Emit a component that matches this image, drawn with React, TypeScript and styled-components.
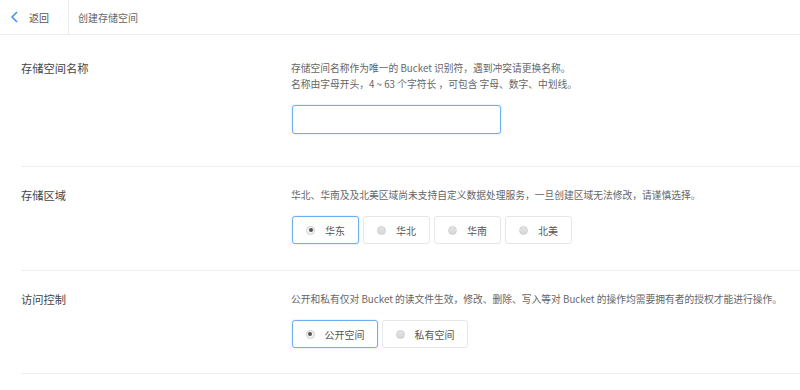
import React, { useState } from "react";
import styled, { createGlobalStyle } from "styled-components";

const GlobalStyle = createGlobalStyle`
    body {
        margin: 0;
        background: #fff;
        font-family: "Noto Sans CJK SC", "Noto Sans", sans-serif;
    }
`;

const Header = styled.div`
    display: flex;
    align-items: center;
    height: 34px;
    border-bottom: 1px solid #ececec;
`;

const BackLink = styled.a`
    display: flex;
    align-items: center;
    gap: 11px;
    width: 69px;
    height: 100%;
    box-sizing: border-box;
    padding-left: 11px;
    border-right: 1px solid #ececec;
    color: #555;
    font-size: 10px;
    cursor: pointer;
`;

const Title = styled.div`
    padding-left: 9px;
    color: #666;
    font-size: 10px;
`;

const Main = styled.div`
    padding: 5px 0 0 21px;
`;

const Section = styled.div<{ $bottom: number }>`
    display: flex;
    padding: 20px 0 ${(p) => p.$bottom}px;
    border-bottom: 1px solid #efefef;
`;

const Label = styled.div`
    width: 270px;
    flex-shrink: 0;
    color: #444;
    font-size: 11.25px;
    line-height: 16px;
`;

const Body = styled.div`
    display: flex;
    flex-direction: column;
    gap: 13px;
`;

const Desc = styled.div`
    color: #666;
    font-size: 9.75px;
    line-height: 16px;
`;

const NameInput = styled.input`
    width: 209px;
    height: 29px;
    margin-left: 1px;
    box-sizing: border-box;
    border: 1px solid #6cb0f2;
    border-radius: 3px;
    box-shadow: 0 0 2px rgba(60, 150, 240, 0.35);
    background: #fff;
    outline: none;
`;

const Options = styled.div`
    display: flex;
    gap: 4px;
    margin-left: 1px;
`;

const Option = styled.button<{ $width: number; $active: boolean }>`
    display: flex;
    align-items: center;
    justify-content: center;
    gap: 10px;
    width: ${(p) => p.$width}px;
    height: 28px;
    padding: 0;
    background: #fff;
    border: 1px solid ${(p) => (p.$active ? "#6cb0f2" : "#e6e6e6")};
    border-radius: 3px;
    box-shadow: ${(p) => (p.$active ? "0 0 2px rgba(60, 150, 240, 0.35)" : "none")};
    color: #555;
    font-family: inherit;
    font-size: 10px;
    cursor: pointer;
`;

const Dot = styled.span<{ $active: boolean }>`
    position: relative;
    width: 9px;
    height: 9px;
    box-sizing: border-box;
    border-radius: 50%;
    border: 1px solid #cfcfcf;
    background: ${(p) => (p.$active ? "#f4f4f4" : "linear-gradient(#e4e4e4, #d6d6d6)")};

    &::after {
        content: "";
        display: ${(p) => (p.$active ? "block" : "none")};
        position: absolute;
        left: 1.5px;
        top: 1.5px;
        width: 4px;
        height: 4px;
        border-radius: 50%;
        background: #555;
    }
`;

function RadioGroup(props: { items: string[]; width: number; initial: string }): JSX.Element {
    const [value, setValue] = useState(props.initial);
    return <Options>
        {props.items.map((item) => (
            <Option
                key={item}
                $width={props.width}
                $active={item === value}
                onClick={() => setValue(item)}
            >
                <Dot $active={item === value} />
                {item}
            </Option>
        ))}
    </Options>;
}

export default function App(): JSX.Element {
    return <>
        <GlobalStyle />
        <Header>
            <BackLink>
                <svg width="7" height="12" viewBox="0 0 7 12">
                    <path d="M6 1 L1 6 L6 11" fill="none" stroke="#3a8ee6" strokeWidth="1.5" />
                </svg>
                返回
            </BackLink>
            <Title>创建存储空间</Title>
        </Header>
        <Main>
            <Section $bottom={32}>
                <Label>存储空间名称</Label>
                <Body>
                    <Desc>
                        存储空间名称作为唯一的 Bucket 识别符，遇到冲突请更换名称。<br />
                        名称由字母开头，4 ~ 63 个字符长 ，可包含 字母、数字、中划线。
                    </Desc>
                    <NameInput />
                </Body>
            </Section>
            <Section $bottom={26}>
                <Label>存储区域</Label>
                <Body>
                    <Desc>华北、华南及及北美区域尚未支持自定义数据处理服务，一旦创建区域无法修改，请谨慎选择。</Desc>
                    <RadioGroup items={["华东", "华北", "华南", "北美"]} width={67} initial="华东" />
                </Body>
            </Section>
            <Section $bottom={25}>
                <Label>访问控制</Label>
                <Body>
                    <Desc>公开和私有仅对 Bucket 的读文件生效，修改、删除、写入等对 Bucket 的操作均需要拥有者的授权才能进行操作。</Desc>
                    <RadioGroup items={["公开空间", "私有空间"]} width={86} initial="公开空间" />
                </Body>
            </Section>
        </Main>
    </>;
}
